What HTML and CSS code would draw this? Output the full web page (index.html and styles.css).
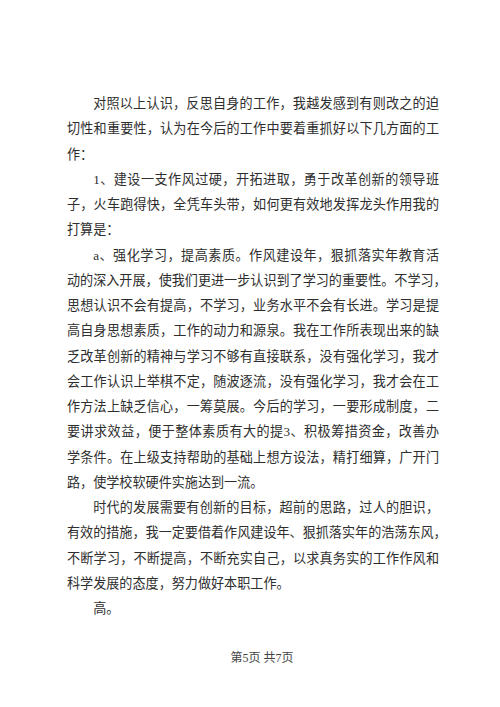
FILE: index.html
```html
<!DOCTYPE html>
<html lang="zh-CN">
<head>
    <meta charset="UTF-8">
    <meta name="viewport" content="width=device-width, initial-scale=1.0">
    <title>第5页</title>
    <link rel="stylesheet" href="styles.css">
</head>
<body>
    <div class="page">
        <div class="content">
            <p>
                <span class="line first">对照以上认识，反思自身的工作，我越发感到有则改之的迫</span>
                <span class="line">切性和重要性，认为在今后的工作中要着重抓好以下几方面的工</span>
                <span class="line last">作：</span>
            </p>
            <p>
                <span class="line first">1、建设一支作风过硬，开拓进取，勇于改革创新的领导班</span>
                <span class="line">子，火车跑得快，全凭车头带，如何更有效地发挥龙头作用我的</span>
                <span class="line last">打算是：</span>
            </p>
            <p>
                <span class="line first">a、强化学习，提高素质。作风建设年，狠抓落实年教育活</span>
                <span class="line">动的深入开展，使我们更进一步认识到了学习的重要性。不学习，</span>
                <span class="line">思想认识不会有提高，不学习，业务水平不会有长进。学习是提</span>
                <span class="line">高自身思想素质，工作的动力和源泉。我在工作所表现出来的缺</span>
                <span class="line">乏改革创新的精神与学习不够有直接联系，没有强化学习，我才</span>
                <span class="line">会工作认识上举棋不定，随波逐流，没有强化学习，我才会在工</span>
                <span class="line">作方法上缺乏信心，一筹莫展。今后的学习，一要形成制度，二</span>
                <span class="line">要讲求效益，便于整体素质有大的提3、积极筹措资金，改善办</span>
                <span class="line">学条件。在上级支持帮助的基础上想方设法，精打细算，广开门</span>
                <span class="line last">路，使学校软硬件实施达到一流。</span>
            </p>
            <p>
                <span class="line first">时代的发展需要有创新的目标，超前的思路，过人的胆识，</span>
                <span class="line">有效的措施，我一定要借着作风建设年、狠抓落实年的浩荡东风，</span>
                <span class="line">不断学习，不断提高，不断充实自己，以求真务实的工作作风和</span>
                <span class="line last">科学发展的态度，努力做好本职工作。</span>
            </p>
            <p>
                <span class="line first last">高。</span>
            </p>
        </div>
        <div class="footer">第5页 共7页</div>
    </div>
</body>
</html>
```

FILE: styles.css
```css
body {
    margin: 0;
    background-color: white;
    font-family: "Liberation Serif", "Noto Sans CJK SC", serif;
    color: #2e2e2e;
}
.page {
    width: 500px;
    padding-top: 91px;
}
.content {
    width: 372px;
    margin-left: 67px;
    font-size: 13.1px;
    line-height: 25.25px;
}
.content p {
    margin: 0;
}
.line {
    display: block;
    height: 25.25px;
    white-space: nowrap;
    text-align: justify;
    text-align-last: justify;
}
.line.first {
    text-indent: 2em;
}
.line.last {
    text-align-last: left;
}
.footer {
    margin-top: 29px;
    padding-left: 24px;
    text-align: center;
    font-size: 12px;
    line-height: 16px;
    color: #444;
}
```
